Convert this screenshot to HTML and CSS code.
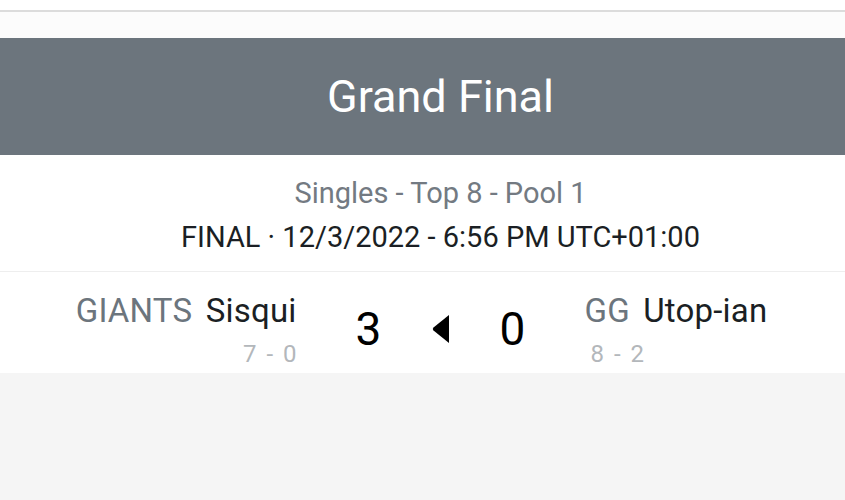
FILE: index.html
```html
<!DOCTYPE html>
<html>
<head>
<meta charset="utf-8">
<link rel="stylesheet" href="styles.css">
</head>
<body>
<div class="topbar"></div>
<header class="title">Grand Final</header>
<section class="info">
  <div class="phase">Singles - Top 8 - Pool 1</div>
  <div class="meta">FINAL · 12/3/2022 - 6:56 PM UTC+01:00</div>
</section>
<section class="match">
  <div class="side left">
    <div class="entrant"><span class="prefix">GIANTS</span> <span class="name">Sisqui</span></div>
    <div class="record">7 - 0</div>
  </div>
  <div class="scores">
    <span class="score">3</span>
    <svg class="winner" width="17" height="28" viewBox="0 0 17 28"><path d="M17 0 L17 28 L1.5 15.5 Q0 14 1.5 12.5 Z" fill="#000"/></svg>
    <span class="score">0</span>
  </div>
  <div class="side right">
    <div class="entrant"><span class="prefix">GG</span> <span class="name">Utop-ian</span></div>
    <div class="record">8 - 2</div>
  </div>
</section>
</body>
</html>
```
FILE: styles.css
```css
html, body {
  margin: 0;
  padding: 0;
}
body {
  background: #f5f5f5;
  font-family: Roboto, "Liberation Sans", sans-serif;
  overflow: hidden;
}
.topbar {
  height: 26px;
  border-top: 10px solid #ffffff;
  box-shadow: inset 0 2px 0 #dcdcdc;
  background: #fcfcfc;
  border-bottom: 2px solid #fcfcfc;
}
.title {
  background: #6c757d;
  color: #ffffff;
  height: 117px;
  display: flex;
  align-items: center;
  justify-content: center;
  padding-left: 36px;
  font-size: 45px;
  font-weight: 400;
}
.info {
  background: #ffffff;
  padding: 16px 0 12px 36px;
  text-align: center;
  border-bottom: 1px solid #eeeeee;
  font-size: 29px;
  line-height: 44px;
}
.phase {
  color: #737a82;
}
.meta {
  color: #1b1f24;
}
.match {
  background: #ffffff;
  height: 101px;
  display: grid;
  grid-template-columns: 1fr 288px 1fr;
  padding-left: 36px;
}
.side {
  padding-top: 19px;
}
.left {
  text-align: right;
}
.entrant {
  font-size: 33px;
  line-height: 40px;
  white-space: nowrap;
  letter-spacing: 0.2px;
}
.prefix {
  color: #6c757d;
  margin-right: 5px;
}
.name {
  color: #1b1f24;
}
.record {
  color: #b3b7bb;
  font-size: 24px;
  line-height: 34px;
  margin-top: 6px;
  letter-spacing: 2px;
}
.left .record {
  margin-right: -2px;
}
.right .record {
  padding-left: 6px;
}
.scores {
  display: grid;
  grid-template-columns: 48px 48px 48px;
  column-gap: 24px;
  justify-content: center;
  align-items: center;
  padding-top: 32px;
  align-self: start;
}
.score {
  font-size: 46px;
  line-height: 50px;
  text-align: center;
  color: #000000;
}
.winner {
  justify-self: center;
  display: block;
}
```
